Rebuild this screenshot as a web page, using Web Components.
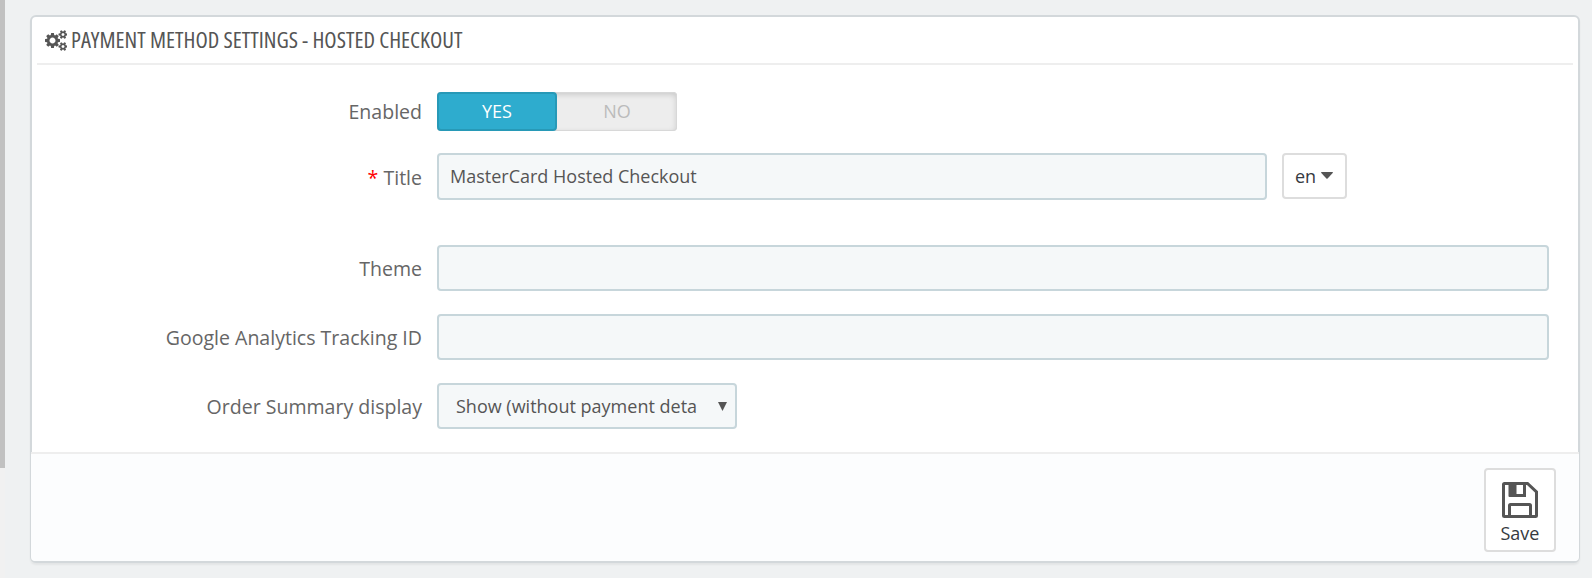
<!DOCTYPE html>
<html lang="en">
<head>
<meta charset="utf-8">
<title>Payment method settings</title>
<style>
html,body{margin:0;height:100%;overflow:hidden}
body{background:#eff1f2;font-family:"Open Sans","Noto Sans",sans-serif;color:#555}
</style>
</head>
<body>
<settings-page>
  <settings-panel>
    <panel-title slot="title"></panel-title>
    <form-row style="--top:27px;--h:39px;--lift:0px" label="Enabled"><yes-no></yes-no></form-row>
    <form-row style="--top:22px;--h:47px;--lift:1px" label="Title" required><text-box style="width:830px">MasterCard Hosted Checkout</text-box><lang-button>en</lang-button></form-row>
    <form-row style="--top:45px;--h:46px;--lift:1px" label="Theme"><text-box></text-box></form-row>
    <form-row style="--top:23px;--h:46px;--lift:1px" label="Google Analytics Tracking ID"><text-box></text-box></form-row>
    <form-row style="--top:23px;--h:46px;--lift:1px" label="Order Summary display"><select-box>Show (without payment deta</select-box></form-row>
    <save-button slot="footer">Save</save-button>
  </settings-panel>
</settings-page>
<script>
const define = (name, html, setup) => customElements.define(name, class extends HTMLElement {
  constructor() {
    super();
    const t = document.createElement('template');
    t.innerHTML = html;
    this.attachShadow({mode: 'open'}).append(t.content.cloneNode(true));
  }
  connectedCallback() { if (setup) setup(this, this.shadowRoot); }
});

define('settings-page', `<style>
:host{display:flex;height:578px;box-sizing:border-box}
.track{width:5px;background:#f1f1f1;flex:none}
.thumb{height:468px;background:#c1c1c1}
main{flex:1;padding:15px 12px 15px 25px}
</style><div class="track"><div class="thumb"></div></div><main><slot></slot></main>`);

define('settings-panel', `<style>
:host{display:flex;flex-direction:column;box-sizing:border-box;height:548px;border:2px solid #d3d8db;border-radius:6px;background:#fff;box-shadow:0 2px 2px rgba(0,0,0,.05)}
header{margin:0 5px;height:46px;border-bottom:2px solid #eee;display:flex;align-items:center}
section{flex:1}
footer{margin:0 -1px;border-top:2px solid #eee;background:#fcfdfe;border-radius:0 0 4px 4px;display:flex;justify-content:flex-end;align-items:flex-start;padding:14px 23px 0 0;height:93px}
</style><header><slot name="title"></slot></header><section><slot></slot></section><footer><slot name="footer"></slot></footer>`);

define('panel-title', `<style>
:host{display:flex;align-items:center;padding-left:7.5px}
svg{display:block;fill:#555}
.t{font-family:"Open Sans","Noto Sans",sans-serif;font-size:21.3px;font-stretch:75%}
</style><svg width="22.5" height="21" viewBox="0 0 1920 1792" preserveAspectRatio="none"><path d="M896 896q0-106-75-181t-181-75-181 75-75 181 75 181 181 75 181-75 75-181zm768 512q0-52-38-90t-90-38-90 38-38 90q0 53 37.5 90.5t90.5 37.5 90.5-37.5 37.5-90.5zm0-1024q0-52-38-90t-90-38-90 38-38 90q0 53 37.5 90.5t90.5 37.5 90.5-37.5 37.5-90.5zm-384 421v185q0 10-7 19.5t-16 10.5l-155 24q-11 35-32 76 34 48 90 115 7 11 7 20 0 12-7 19-23 30-82.5 89.5t-78.5 59.5q-11 0-21-7l-115-90q-37 19-77 31-11 108-23 155-7 24-30 24h-186q-11 0-20-7.5t-10-17.5l-23-153q-34-10-75-31l-118 89q-7 7-20 7-11 0-21-8-144-133-144-160 0-9 7-19 10-14 41-53t47-61q-23-44-35-82l-152-24q-10-1-17-9.5t-7-19.5v-185q0-10 7-19.5t16-10.5l155-24q11-35 32-76-34-48-90-115-7-11-7-20 0-12 7-20 22-30 82-89t79-59q11 0 21 7l115 90q34-18 77-32 11-108 23-154 7-24 30-24h186q11 0 20 7.5t10 17.5l23 153q34 10 75 31l118-89q8-7 20-7 11 0 21 8 144 133 144 160 0 8-7 19-12 16-42 54t-45 60q23 48 34 82l152 23q10 2 17 10.5t7 19.5zm640 533v140q0 16-149 31-12 27-30 52 51 113 51 138 0 4-4 7-122 71-124 71-8 0-46-47t-52-68q-20 2-30 2t-30-2q-14 21-52 68t-46 47q-2 0-124-71-4-3-4-7 0-25 51-138-18-25-30-52-149-15-149-31v-140q0-16 149-31 13-29 30-52-51-113-51-138 0-4 4-7 4-2 35-20t59-34 30-16q8 0 46 46.5t52 67.5q20-2 30-2t30 2q51-71 92-112l6-2q4 0 124 70 4 3 4 7 0 25-51 138 17 23 30 52 149 15 149 31zm0-1024v140q0 16-149 31-12 27-30 52 51 113 51 138 0 4-4 7-122 71-124 71-8 0-46-47t-52-68q-20 2-30 2t-30-2q-14 21-52 68t-46 47q-2 0-124-71-4-3-4-7 0-25 51-138-18-25-30-52-149-15-149-31v-140q0-16 149-31 13-29 30-52-51-113-51-138 0-4 4-7 4-2 35-20t59-34 30-16q8 0 46 46.5t52 67.5q20-2 30-2t30 2q51-71 92-112l6-2q4 0 124 70 4 3 4 7 0 25-51 138 17 23 30 52 149 15 149 31z"/></svg><svg class="t" width="400" height="46"><text x="4" y="31" textLength="391.5" lengthAdjust="spacingAndGlyphs">PAYMENT METHOD SETTINGS - HOSTED CHECKOUT</text></svg>`);

define('form-row', `<style>
:host{display:flex;margin-top:var(--top);height:var(--h);padding-right:29px}
.label{width:390px;flex:none;text-align:right;padding-right:15px;font-size:19.55px;line-height:var(--h);margin-top:var(--lift);color:#666;white-space:pre}
.star{color:#f00}
.field{flex:1;display:flex;align-items:flex-start}
</style><div class="label"><span class="star"></span><span class="text"></span></div><div class="field"><slot></slot></div>`,
(el, root) => {
  root.querySelector('.text').textContent = el.getAttribute('label');
  if (el.hasAttribute('required')) root.querySelector('.star').textContent = '* ';
});

define('yes-no', `<style>
:host{display:flex;width:240px;height:39px;border-radius:4px;background:#ededed;box-shadow:inset 0 0 0 1px #d8d8d8,inset 0 2px 6px rgba(0,0,0,.18);font-size:18px;line-height:38px;text-align:center}
.y{width:120px;box-sizing:border-box;border:2px solid #2799b7;border-radius:4px;background:#2eacce;color:#fff;line-height:34px}
.n{width:120px;color:#bbb}
</style><div class="y">YES</div><div class="n">NO</div>`);

define('text-box', `<style>
:host{display:block;width:100%;height:100%;box-sizing:border-box;border:2px solid #c7d6db;border-radius:4px;background:#f5f8f9;padding:0 11px;font-size:18px;line-height:42px;white-space:nowrap}
</style><slot></slot>`);

define('lang-button', `<style>
:host{display:flex;align-items:center;margin-left:15px;box-sizing:border-box;width:65px;height:46px;border:2px solid #ddd;border-radius:4px;padding-left:11px;font-size:18px;color:#363a41}
svg{margin:-1px 0 0 5px}
</style><slot></slot><svg width="12" height="7" viewBox="0 0 12 7"><path d="M.6 0h10.8q.9.2.3 1L6.6 6.4q-.6.5-1.2 0L.3 1Q-.3.200.6 0z" fill="#555"/></svg>`);

define('select-box', `<style>
:host{display:flex;align-items:center;justify-content:space-between;width:300px;height:46px;box-sizing:border-box;border:2px solid #c7d6db;border-radius:4px;background:#f5f8f9;padding:0 8px 0 17px;font-size:18px;white-space:nowrap}
span{margin-top:-1px}
</style><span><slot></slot></span><svg width="9" height="9" viewBox="0 0 9 9"><path d="M0 0h9L4.500 9z" fill="#555"/></svg>`);

define('save-button', `<style>
:host{display:flex;flex-direction:column;align-items:center;box-sizing:border-box;width:72px;height:84px;border:2px solid #ddd;border-radius:4px;background:#fff;padding-top:12px;font-size:18px;line-height:25px;color:#363a41}
svg{display:block;margin-bottom:3px}
</style><svg width="36" height="36" viewBox="0 0 36 36" fill="none" stroke="#555" stroke-width="3"><path d="M1.500 2.500q0-1 1-1H25.500L34.500 10V33.500q0 1-1 1H2.500q-1 0-1-1z"/><path d="M7.500 34V23.500q0-1 1-1H27.500q1 0 1 1V34M22.500 2V13.500H8"/><path d="M6.500 1h8v14h-7q-1 0-1-1z" fill="#555" stroke="none"/></svg><slot></slot>`);
</script>
</body>
</html>
